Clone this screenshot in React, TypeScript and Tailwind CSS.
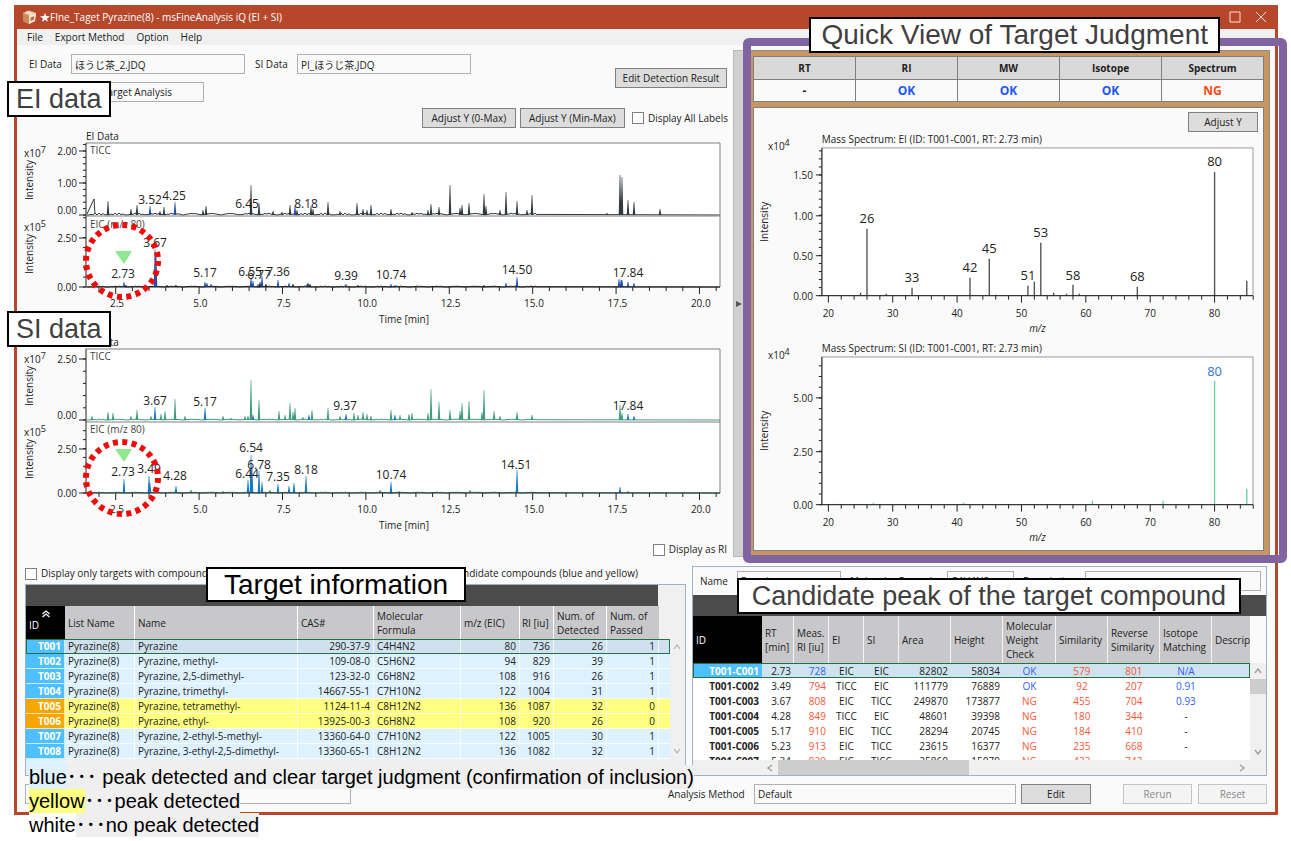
import React, { useState } from "react";

type Peak = [number, number];
type Label = [number, number, string];

interface Trace {
  top: number;
  base: number;
  name: string;
  exponent: string;
  color: string;
  markColor: string;
  noise: number;
  peaks: Peak[];
  marked: Peak[];
  labels: Label[];
  ticks: [number, number, string][];
  minor: number;
}

const eiTraces: Trace[] = [
  {
    top: 13,
    base: 85,
    name: "TICC",
    exponent: "7",
    color: "#33383c",
    markColor: "#1d4fb0",
    noise: 2,
    peaks: [
      [108, 14], [131, 6], [137, 10], [160, 4], [164, 8], [203, 5], [206, 9], [251, 30], [259, 12],
      [273, 4], [282, 3], [290, 10], [297, 5], [311, 9], [313, 6], [328, 13], [340, 4], [357, 12],
      [363, 6], [367, 5], [371, 10], [391, 6], [412, 3], [428, 5], [431, 11], [439, 8], [450, 30],
      [460, 7], [462, 10], [469, 12], [484, 21], [486, 9], [500, 5], [506, 23], [517, 14], [527, 5],
      [532, 20], [607, 2], [620, 40], [622, 38], [628, 15], [634, 13], [660, 6],
    ],
    marked: [[150, 9], [175, 13], [295, 9]],
    labels: [[150, 74, "3.52"], [174, 70, "4.25"], [247, 78, "6.45"], [306, 78, "8.18"]],
    ticks: [[21, 25, "2.00"], [53, 57, "1.00"], [85, 84, "0.00"]],
    minor: 6.4,
  },
  {
    top: 87,
    base: 157,
    name: "EIC (m/z 80)",
    exponent: "5",
    color: "#222222",
    markColor: "#1d4fb0",
    noise: 1,
    peaks: [[126, 2], [167, 2], [176, 2], [260, 5], [266, 3], [293, 3], [308, 4], [310, 3], [358, 2], [484, 2]],
    marked: [
      [124, 5], [155, 38], [156, 34], [205, 5], [207, 4], [211, 3], [251, 9], [253, 6], [258, 3],
      [262, 11], [278, 7], [289, 4], [307, 3], [346, 3], [391, 3], [395, 2], [506, 4], [517, 10],
      [619, 8], [621, 7], [622, 7], [628, 5], [634, 4],
    ],
    labels: [
      [155, 117, "3.67"], [123, 148, "2.73"], [205, 147, "5.17"], [250, 146, "6.55"], [259, 149, "6.77"],
      [278, 146, "7.36"], [346, 150, "9.39"], [391, 149, "10.74"], [517, 144, "14.50"], [628, 147, "17.84"],
    ],
    ticks: [[108, 112, "2.50"], [157, 161, "0.00"]],
    minor: 9.9,
  },
];

const siTraces: Trace[] = [
  {
    top: 13,
    base: 84,
    name: "TICC",
    exponent: "7",
    color: "#3f9e7e",
    markColor: "#1679c4",
    noise: 1,
    peaks: [
      [92, 4], [108, 8], [113, 7], [131, 4], [137, 10], [151, 4], [161, 6], [165, 9], [175, 21],
      [185, 4], [223, 4], [231, 2], [245, 4], [248, 4], [251, 40], [259, 20], [279, 9], [285, 5],
      [290, 17], [293, 8], [295, 12], [303, 3], [312, 10], [328, 12], [340, 4], [354, 7], [358, 5],
      [363, 8], [367, 6], [371, 4], [391, 10], [400, 5], [409, 6], [412, 7], [428, 7], [431, 31],
      [439, 18], [450, 10], [460, 9], [462, 17], [469, 19], [482, 8], [484, 30], [494, 9], [500, 4],
      [517, 8], [532, 5], [620, 15], [622, 7],
    ],
    marked: [[155, 13], [205, 12], [253, 5], [309, 5], [346, 6], [395, 5], [628, 6], [634, 4]],
    labels: [[155, 69, "3.67"], [205, 70, "5.17"], [345, 74, "9.37"], [628, 74, "17.84"]],
    ticks: [[23, 27, "2.50"], [84, 83, "0.00"]],
    minor: 12.2,
  },
  {
    top: 86,
    base: 157,
    name: "EIC (m/z 80)",
    exponent: "5",
    color: "#2c8a68",
    markColor: "#1679c4",
    noise: 1,
    peaks: [[157, 3], [191, 3], [223, 2], [270, 3], [380, 3], [399, 2], [470, 3], [628, 2]],
    marked: [
      [124, 14], [149, 17], [150, 10], [176, 7], [248, 13], [251, 38], [252, 26], [259, 22], [262, 11],
      [278, 9], [289, 7], [294, 10], [306, 17], [391, 11], [517, 23], [620, 6],
    ],
    labels: [
      [123, 140, "2.73"], [149, 137, "3.49"], [175, 144, "4.28"], [251, 116, "6.54"], [259, 133, "6.78"],
      [247, 142, "6.44"], [278, 145, "7.35"], [306, 138, "8.18"], [391, 143, "10.74"], [516, 133, "14.51"],
    ],
    ticks: [[113, 117, "2.50"], [157, 161, "0.00"]],
    minor: 8.9,
  },
];

const targets = [
  ["T001", "Pyrazine", "290-37-9", "C4H4N2", "80", "736", "26", "1"],
  ["T002", "Pyrazine, methyl-", "109-08-0", "C5H6N2", "94", "829", "39", "1"],
  ["T003", "Pyrazine, 2,5-dimethyl-", "123-32-0", "C6H8N2", "108", "916", "26", "1"],
  ["T004", "Pyrazine, trimethyl-", "14667-55-1", "C7H10N2", "122", "1004", "31", "1"],
  ["T005", "Pyrazine, tetramethyl-", "1124-11-4", "C8H12N2", "136", "1087", "32", "0"],
  ["T006", "Pyrazine, ethyl-", "13925-00-3", "C6H8N2", "108", "920", "26", "0"],
  ["T007", "Pyrazine, 2-ethyl-5-methyl-", "13360-64-0", "C7H10N2", "122", "1005", "30", "1"],
  ["T008", "Pyrazine, 3-ethyl-2,5-dimethyl-", "13360-65-1", "C8H12N2", "136", "1082", "32", "1"],
];

const candidates = [
  ["T001-C001", "2.73", "728", "EIC", "EIC", "82802", "58034", "OK", "579", "801", "N/A"],
  ["T001-C002", "3.49", "794", "TICC", "EIC", "111779", "76889", "OK", "92", "207", "0.91"],
  ["T001-C003", "3.67", "808", "EIC", "TICC", "249870", "173877", "NG", "455", "704", "0.93"],
  ["T001-C004", "4.28", "849", "TICC", "EIC", "48601", "39398", "NG", "180", "344", "-"],
  ["T001-C005", "5.17", "910", "EIC", "TICC", "28294", "20745", "NG", "184", "410", "-"],
  ["T001-C006", "5.23", "913", "EIC", "TICC", "23615", "16377", "NG", "235", "668", "-"],
  ["T001-C007", "5.34", "920", "EIC", "TICC", "25860", "15079", "NG", "423", "742", "-"],
];

const range = (n: number) => Array.from({ length: n }, (_, i) => i);

const peakPath = (peaks: Peak[], base: number) =>
  peaks.map(([x, h]) => `M${x - 1.3} ${base}L${x - 0.3} ${base - h}H${x + 0.3}L${x + 1.3} ${base}Z`).join("");

const noisePath = (base: number, amp: number) =>
  "M87 " + base + range(226).map((i) => {
    const level = Math.abs(Math.sin(i * 12.9) * Math.sin(i * 4.7)) * amp;
    return `L${89 + i * 2} ${(base - level).toFixed(1)}`;
  }).join("") + `L720 ${base}`;

interface ChromatogramProps {
  title: string;
  traces: Trace[];
  markerY: number;
  circleY: number;
}

const Chromatogram: React.FC<ChromatogramProps> = ({ title, traces, markerY, circleY }) => (
  <svg viewBox="17 0 716 206" className="block w-full" role="img" aria-label={title}>
    <text x="86" y="10" fontSize="10" fill="#222">{title}</text>
    <rect x="86" y="13" width="634" height="144" fill="#fff" />
    {traces.map((t) => (
      <g key={t.name}>
        <text x="90" y={t.top + 11} fontSize="10" fill="#444">{t.name}</text>
        <path d={noisePath(t.base, t.noise)} fill="none" stroke={t.color} strokeWidth="1" />
        <path d={peakPath(t.peaks, t.base)} fill={t.color} />
        <path d={peakPath(t.marked, t.base)} fill={t.markColor} />
        {t.labels.map(([x, y, text]) => (
          <text key={text} x={x} y={y} fontSize="12" fill="#222" textAnchor="middle">{text}</text>
        ))}
        {range(Math.floor((t.base - t.top) / t.minor) + 1).map((i) => (
          <path key={i} d={`M83 ${t.base - i * t.minor}h3`} stroke="#222" />
        ))}
        {t.ticks.map(([y, textY, text]) => (
          <g key={text}>
            <path d={`M79 ${y}h7`} stroke="#222" />
            <text x="77" y={textY} fontSize="10" fill="#222" textAnchor="end">{text}</text>
          </g>
        ))}
        <text x="24" y={t.top + 14} fontSize="10" fill="#222">
          x10<tspan dy="-4" fontSize="9">{t.exponent}</tspan>
        </text>
        <text transform={`translate(33 ${t.top + 37}) rotate(-90)`} fontSize="10" fill="#222" textAnchor="middle">
          Intensity
        </text>
      </g>
    ))}
    {title === "EI Data" && <path d="M94 69L87 84M94 69L95 84" stroke="#33383c" fill="none" />}
    <path d="M86 13H720V157M86 86H720" fill="none" stroke="#808080" />
    <path d="M86 13V157H720" fill="none" stroke="#222" />
    {range(38).map((i) => {
      const x = 99 + i * 16.68;
      const major = i % 5 === 1;
      return x < 720 && <path key={i} d={`M${x} 157v${major ? 7 : 4}`} stroke="#222" />;
    })}
    {["2.5", "5.0", "7.5", "10.0", "12.5", "15.0", "17.5", "20.0"].map((text, i) => (
      <text key={text} x={117 + i * 83.4} y="177" fontSize="10" fill="#222" textAnchor="middle">{text}</text>
    ))}
    <text x="404" y="193" fontSize="10" fill="#222" textAnchor="middle">Time [min]</text>
    <path d={`M115 ${markerY}h17l-8 13z`} fill="#8fe88f" />
    <circle cx="122" cy={circleY} r="36" fill="none" stroke="#f00a0a" strokeWidth="6" strokeDasharray="5 4.425" />
  </svg>
);

interface SpectrumProps {
  title: string;
  peaks: Peak[];
  labels: Label[];
  ticks: [number, string][];
  minor: number;
  stroke: string;
  labelColor: string;
}

const Spectrum: React.FC<SpectrumProps> = ({ title, peaks, labels, ticks, minor, stroke, labelColor }) => {
  const mz = (v: number) => 828.5 + (v - 20) * 6.45;
  return (
    <svg viewBox="754 0 510 209" className="block w-full" role="img" aria-label={title}>
      <text x="822" y="13" fontSize="10" fill="#222">{title}</text>
      <rect x="822" y="18" width="432" height="148" fill="#fff" stroke="#999" />
      <text x="768" y="20" fontSize="10" fill="#222">
        x10<tspan dy="-4" fontSize="9">4</tspan>
      </text>
      <text transform="translate(768 92) rotate(-90)" fontSize="10" fill="#222" textAnchor="middle">Intensity</text>
      {peaks.map(([v, h]) => (
        <path key={v} d={`M${mz(v)} 166v${-h}`} stroke={stroke} strokeWidth="1.4" />
      ))}
      {labels.map(([v, y, text]) => (
        <text key={text} x={mz(v)} y={y} fontSize="13" fill={labelColor} textAnchor="middle">{text}</text>
      ))}
      <path d="M822 18V166H1254" fill="none" stroke="#222" />
      {range(Math.floor(148 / minor) + 1).map((i) => (
        <path key={i} d={`M819 ${166 - i * minor}h3`} stroke="#222" />
      ))}
      {ticks.map(([y, text]) => (
        <g key={text}>
          <path d={`M816 ${y}h6`} stroke="#222" />
          <text x="813" y={y + 4} fontSize="10" fill="#222" textAnchor="end">{text}</text>
        </g>
      ))}
      {range(34).map((i) => (
        <path key={i} d={`M${mz(20 + i * 2)} 166v${i % 5 === 0 ? 7 : 4}`} stroke="#222" />
      ))}
      {[20, 30, 40, 50, 60, 70, 80].map((v) => (
        <text key={v} x={mz(v)} y="187" fontSize="10" fill="#222" textAnchor="middle">{v}</text>
      ))}
      <text x="1038" y="202" fontSize="10" fontStyle="italic" fill="#222" textAnchor="middle">m/z</text>
    </svg>
  );
};

const field = "h-5 min-w-0 border border-[#b0b0b0] bg-[#fafafa] px-[3px]";
const button = "h-5 border border-[#808080] bg-[#dddddd] text-center whitespace-nowrap";
const disabledButton = "h-5 border border-[#c4c4c4] bg-[#f4f4f4] text-center text-[#888888]";
const callout = "absolute border-2 border-black bg-white whitespace-nowrap font-['Liberation_Sans',sans-serif]";

const Chevron: React.FC<{ d: string }> = ({ d }) => (
  <svg viewBox="0 0 8 8" className="h-2 w-2" fill="none" stroke="#a0a0a0" strokeWidth="1.4">
    <path d={d} />
  </svg>
);

const TargetTable: React.FC = () => {
  const [selected, setSelected] = useState("T001");
  const head = "border-r border-white px-[3px] text-left font-normal";
  const cell = "h-[15px] border-r border-b border-white/70 px-[3px] whitespace-nowrap";

  return (
    <div className="flex-1 border border-[#9fb3c8] bg-[#f0f0f0]">
      <div className="mr-[27px] h-[21px] bg-[#4b4b4b]" />
      <div className="flex">
        <table className="min-w-0 flex-1 table-fixed border-separate border-spacing-0 leading-[14px]">
          <colgroup>
            <col className="w-[39px]" />
            <col className="w-[70px]" />
            <col />
            <col className="w-[76px]" />
            <col className="w-[87px]" />
            <col className="w-[59px]" />
            <col className="w-[34px]" />
            <col className="w-[53px]" />
            <col className="w-[52px]" />
            <col className="w-[11px]" />
          </colgroup>
          <thead>
            <tr className="h-[33px] bg-[#c8c8cb]">
              <th className="bg-black px-[3px] text-left font-normal text-white">
                <svg viewBox="0 0 10 8" className="mx-auto h-2 w-2.5" fill="none" stroke="#fff" strokeWidth="1.3">
                  <path d="M1.5 4L5 1L8.5 4M1.5 7L5 4L8.5 7" />
                </svg>
                <span className="block pb-1">ID</span>
              </th>
              <th className={head}>List Name</th>
              <th className={head}>Name</th>
              <th className={head}>CAS#</th>
              <th className={head}>Molecular<br />Formula</th>
              <th className={head}>m/z (EIC)</th>
              <th className="border-r border-white px-[2px] text-left font-normal whitespace-nowrap">RI [iu]</th>
              <th className={head}>Num. of<br />Detected</th>
              <th className="px-[3px] text-left font-normal">Num. of<br />Passed</th>
              <th className="bg-[#f0f0f0]" />
            </tr>
          </thead>
          <tbody>
            {targets.map(([id, name, cas, formula, mz, ri, detected, passed]) => {
              const yellow = passed === "0";
              return (
                <tr
                  key={id}
                  onClick={() => setSelected(id)}
                  className={
                    id === selected
                      ? "bg-[#cfe1ee] outline outline-1 -outline-offset-1 outline-[#217346]"
                      : yellow
                        ? "bg-[#ffff80]"
                        : "bg-[#ddf1ff]"
                  }
                >
                  <td className={`${cell} text-right font-bold text-white ${yellow ? "bg-[#f7a600]" : "bg-[#4fc0ff]"}`}>{id}</td>
                  <td className={cell}>Pyrazine(8)</td>
                  <td className={cell}>{name}</td>
                  <td className={`${cell} text-right`}>{cas}</td>
                  <td className={cell}>{formula}</td>
                  <td className={`${cell} text-right`}>{mz}</td>
                  <td className={`${cell} text-right`}>{ri}</td>
                  <td className={`${cell} text-right`}>{detected}</td>
                  <td className={`${cell} text-right`}>{passed}</td>
                  <td className="border-b border-white/70" />
                </tr>
              );
            })}
          </tbody>
        </table>
        <div className="mt-[33px] flex w-[15px] flex-col items-center justify-between py-1 opacity-60">
          <Chevron d="M1 6L4 2L7 6" />
          <Chevron d="M1 2L4 6L7 2" />
        </div>
      </div>
      <div className="h-4 w-[39px] bg-[#ddf1ff]" />
    </div>
  );
};

const CandidateTable: React.FC = () => {
  const head = "border-r border-white/80 px-[3px] text-left font-normal";
  const cell = "h-[15px] px-[3px] text-right whitespace-nowrap";
  const mid = "h-[15px] px-[3px] text-center whitespace-nowrap";
  const red = "text-[#ff5533]";
  const blue = "text-[#2f5fff]";

  return (
    <div className="min-w-0 flex-[574] border border-[#9fb3c8] bg-[#fafafa]">
      <div className="flex items-center px-[5px] pt-1 pb-1">
        <label htmlFor="name" className="w-[39px] pl-[2px]">Name</label>
        <input id="name" readOnly value="Pyrazine" className={`${field} w-[104px]`} />
        <label htmlFor="formula" className="w-[106px] pl-[9px]">Molecular Formula</label>
        <input id="formula" readOnly value="C4H4N2" className={`${field} w-[67px]`} />
        <label htmlFor="description" className="w-[71px] pl-[9px]">Description</label>
        <input id="description" readOnly value="" className={`${field} flex-1`} />
      </div>
      <div className="h-[21px] bg-[#4b4b4b]" />
      <div className="flex h-[144px] overflow-hidden">
        <div className="min-w-0 flex-1 overflow-hidden bg-white">
          <table className="w-full table-fixed border-separate border-spacing-0 leading-[14px]">
            <colgroup>
              <col className="w-[69px]" />
              <col className="w-[32px]" />
              <col className="w-[35px]" />
              <col className="w-[35px]" />
              <col className="w-[35px]" />
              <col className="w-[52px]" />
              <col className="w-[52px]" />
              <col className="w-[53px]" />
              <col className="w-[52px]" />
              <col className="w-[52px]" />
              <col className="w-[52px]" />
              <col />
            </colgroup>
            <thead>
              <tr className="h-[47px] bg-[#c8c8cb]">
                <th className="bg-black px-[3px] text-left font-normal text-white">ID</th>
                <th className={head}>RT<br />[min]</th>
                <th className={head}>Meas.<br />RI [iu]</th>
                <th className={head}>EI</th>
                <th className={head}>SI</th>
                <th className={head}>Area</th>
                <th className={head}>Height</th>
                <th className={head}>Molecular<br />Weight<br />Check</th>
                <th className={head}>Similarity</th>
                <th className={head}>Reverse<br />Similarity</th>
                <th className={head}>Isotope<br />Matching</th>
                <th className="overflow-hidden px-[3px] text-left font-normal">Description</th>
              </tr>
            </thead>
            <tbody>
              {candidates.map(([id, rt, ri, ei, si, area, height, check, sim, reverse, isotope], i) => (
                <tr key={id} className={i === 0 ? "bg-[#cfe3ee] outline outline-1 -outline-offset-1 outline-[#217346]" : "bg-white"}>
                  <td className={`${cell} font-bold ${i === 0 ? "bg-[#4fc0ff] text-white" : ""}`}>{id}</td>
                  <td className={cell}>{rt}</td>
                  <td className={`${cell} ${i === 0 ? blue : red}`}>{ri}</td>
                  <td className={mid}>{ei}</td>
                  <td className={mid}>{si}</td>
                  <td className={cell}>{area}</td>
                  <td className={cell}>{height}</td>
                  <td className={`${mid} ${check === "OK" ? blue : red}`}>{check}</td>
                  <td className={`${mid} ${red}`}>{sim}</td>
                  <td className={`${mid} ${red}`}>{reverse}</td>
                  <td className={`${mid} ${isotope === "-" ? "" : blue}`}>{isotope}</td>
                  <td />
                </tr>
              ))}
            </tbody>
          </table>
        </div>
        <div className="mt-[47px] flex w-4 flex-col items-center bg-[#f0f0f0] pt-1">
          <Chevron d="M1 6L4 2L7 6" />
          <div className="mt-1 h-[15px] w-full bg-[#cdcdcd]" />
          <div className="mt-auto mb-1"><Chevron d="M1 2L4 6L7 2" /></div>
        </div>
      </div>
      <div className="flex h-[15px] items-center bg-[#f0f0f0] pr-5 pl-[73px]">
        <Chevron d="M6 1L2 4L6 7" />
        <div className="ml-1 h-full w-[191px] bg-[#cdcdcd]" />
        <div className="ml-auto"><Chevron d="M2 1L6 4L2 7" /></div>
      </div>
    </div>
  );
};

const Judgment: React.FC = () => (
  <div className="relative min-w-0 flex-[520]">
    <div className="flex h-full flex-col border border-[#8c8c8c] bg-[#c89664] py-[5px] pr-[5px] pl-[2px]">
      <table className="w-full table-fixed border-collapse bg-[#fafafa] text-center">
        <thead>
          <tr className="h-[23px] bg-[#d9d9d9]">
            {["RT", "RI", "MW", "Isotope", "Spectrum"].map((name) => (
              <th key={name} className="border border-[#808080] font-bold">{name}</th>
            ))}
          </tr>
        </thead>
        <tbody>
          <tr className="h-[22px] text-xs font-bold">
            <td className="border border-[#808080]">-</td>
            <td className="border border-[#808080] text-[#1a56ff]">OK</td>
            <td className="border border-[#808080] text-[#1a56ff]">OK</td>
            <td className="border border-[#808080] text-[#1a56ff]">OK</td>
            <td className="border border-[#808080] text-[#ff4a12]">NG</td>
          </tr>
        </tbody>
      </table>
      <div className="mt-[5px] flex-1 border border-[#808080] bg-[#fafafa] pt-1">
        <div className="flex h-[18px] justify-end pr-[5px]">
          <button className={`${button} w-[70px]`}>Adjust Y</button>
        </div>
        <Spectrum
          title="Mass Spectrum: EI (ID: T001-C001, RT: 2.73 min)"
          stroke="#555"
          labelColor="#222"
          peaks={[
            [25, 3], [26, 67], [29, 2], [33, 8], [42, 18], [45, 37], [46, 1], [51, 10], [52, 14], [53, 53],
            [55, 3], [57, 2], [58, 11], [59, 2], [68, 9], [80, 124], [85, 15],
          ]}
          labels={[
            [26, 93, "26"], [33, 152, "33"], [42, 142, "42"], [45, 123, "45"], [51, 150, "51"],
            [53, 107, "53"], [58, 150, "58"], [68, 151, "68"], [80, 36, "80"],
          ]}
          ticks={[[45, "1.50"], [86, "1.00"], [126, "0.50"], [166, "0.00"]]}
          minor={8.06}
        />
        <Spectrum
          title="Mass Spectrum: SI (ID: T001-C001, RT: 2.73 min)"
          stroke="#6fd0a4"
          labelColor="#2f73e0"
          peaks={[[21, 1], [27, 2], [41, 2], [61, 4], [72, 4], [80, 124], [85, 16]]}
          labels={[[80, 37, "80"]]}
          ticks={[[59, "5.00"], [113, "2.50"], [166, "0.00"]]}
          minor={10.7}
        />
      </div>
    </div>
    <div className="pointer-events-none absolute -top-[12px] -right-[17px] -bottom-[6px] -left-[7px] rounded-md border-8 border-[#8064a2]" />
    <div className={`${callout} -top-[33px] right-[50px] px-[10px] text-[28px] leading-8 text-[#404040]`}>
      Quick View of Target Judgment
    </div>
  </div>
);

const App: React.FC = () => {
  const [allLabels, setAllLabels] = useState(false);
  const [displayRi, setDisplayRi] = useState(false);
  const [onlyTargets, setOnlyTargets] = useState(false);
  const checkbox = "h-3 w-3 appearance-none border border-[#808080] bg-white checked:bg-[#4fc0ff]";

  return (
    <div className="relative bg-white pt-[5px] pr-[13px] pb-[25px] pl-[14px] font-['Open_Sans','Noto_Sans_CJK_JP',sans-serif] text-[10px] text-[#222222]">
      <div className="border-[3px] border-t-0 border-[#b7472a] bg-[#fafafa]">
        <header className="flex h-6 items-center bg-[#b7472a] px-1 text-white">
          <svg viewBox="0 0 16 16" className="mr-[3px] h-4 w-4">
            <path d="M2 4L8 1.5L15 4L14 12L8 15L2 12Z" fill="#e9c9a4" />
            <path d="M2 4L8 6.5V15L2 12Z" fill="#c98a5c" />
            <path d="M8 6.5L15 4L14 12L8 15Z" fill="#f4e3cf" />
            <path d="M9.5 8.5L13 7.2V10.5L9.5 12Z" fill="#d2603c" />
            <path d="M5 2.8L11 5.2" stroke="#fff" />
          </svg>
          <h1>★FIne_Taget Pyrazine(8) - msFineAnalysis iQ (EI + SI)</h1>
          <button aria-label="Maximize" className="ml-auto p-1">
            <svg viewBox="0 0 12 12" className="h-3 w-3" fill="none" stroke="#ffe0d6">
              <path d="M1 1H11V11H1Z" />
            </svg>
          </button>
          <button aria-label="Close" className="ml-[6px] p-1">
            <svg viewBox="0 0 12 12" className="h-3 w-3" fill="none" stroke="#ffe0d6">
              <path d="M1 1L11 11M11 1L1 11" />
            </svg>
          </button>
        </header>
        <nav className="flex h-4 items-center gap-3 bg-[#f0f0f0] px-[10px]">
          <button>File</button>
          <button>Export Method</button>
          <button>Option</button>
          <button>Help</button>
        </nav>

        <main>
          <div className="flex pt-[5px] pr-[5px]">
            <section className="min-w-0 flex-[716]">
              <div className="flex justify-between pt-[4px] pr-[6px] pl-3">
                <div>
                  <div className="flex items-center">
                    <label htmlFor="ei" className="w-[42px]">EI Data</label>
                    <input id="ei" readOnly value="ほうじ茶_2.JDQ" className={`${field} w-[174px]`} />
                    <label htmlFor="si" className="w-[52px] pl-[10px]">SI Data</label>
                    <input id="si" readOnly value="PI_ほうじ茶.JDQ" className={`${field} w-[174px]`} />
                  </div>
                  <input
                    aria-label="Analysis type"
                    readOnly
                    value="Target Analysis"
                    className={`${field} mt-2 w-[175px] pl-[72px]`}
                  />
                </div>
                <button className={`${button} mt-[14px] w-[112px]`}>Edit Detection Result</button>
              </div>
              <div className="flex items-center justify-end gap-1 pt-[6px] pr-[5px]">
                <button className={`${button} w-[94px]`}>Adjust Y (0-Max)</button>
                <button className={`${button} w-[105px]`}>Adjust Y (Min-Max)</button>
                <label className="flex items-center gap-1 pl-[3px]">
                  <input type="checkbox" className={checkbox} checked={allLabels} onChange={() => setAllLabels(!allLabels)} />
                  Display All Labels
                </label>
              </div>
              <div className="pt-[2px]">
                <Chromatogram title="EI Data" traces={eiTraces} markerY={121} circleY={131} />
                <Chromatogram title="SI Data" traces={siTraces} markerY={113} circleY={142} />
              </div>
              <label className="flex items-center justify-end gap-1 pr-[6px]">
                <input type="checkbox" className={checkbox} checked={displayRi} onChange={() => setDisplayRi(!displayRi)} />
                Display as RI
              </label>
            </section>
            <button aria-label="Collapse panel" className="flex w-[17px] items-center border border-[#b8b8b8] bg-[#d0d0d0] pl-[2px]">
              <svg viewBox="0 0 6 8" className="h-2 w-[6px]">
                <path d="M0 1L6 4L0 7Z" fill="#555" />
              </svg>
            </button>
            <Judgment />
          </div>

          <div className="flex gap-[6px] px-2 pt-[9px]">
            <section className="flex min-w-0 flex-[662] flex-col">
              <div className="flex h-[18px] items-start">
                <label className="flex items-center gap-1">
                  <input type="checkbox" className={checkbox} checked={onlyTargets} onChange={() => setOnlyTargets(!onlyTargets)} />
                  Display only targets with compound
                </label>
                <span className="ml-auto pr-[48px]">candidate compounds (blue and yellow)</span>
              </div>
              <TargetTable />
            </section>
            <CandidateTable />
          </div>

          <footer className="flex items-center px-2 py-2">
            <input aria-label="Status" readOnly value="" className={`${field} w-[326px]`} />
            <label htmlFor="method" className="ml-auto w-[86px]">Analysis Method</label>
            <input id="method" readOnly value="Default" className={`${field} w-[262px]`} />
            <button className={`${button} ml-[5px] w-[70px]`}>Edit</button>
            <button disabled className={`${disabledButton} ml-8 w-[69px]`}>Rerun</button>
            <button disabled className={`${disabledButton} ml-[6px] w-[69px]`}>Reset</button>
          </footer>
        </main>
      </div>

      <div className={`${callout} top-[81px] left-[7px] px-[7px] text-[27px] leading-8 text-[#404040]`}>EI data</div>
      <div className={`${callout} top-[311px] left-[7px] px-[7px] text-[27px] leading-8 text-[#404040]`}>SI data</div>
      <div className={`${callout} top-[567px] left-[206px] px-4 text-[28px] leading-[31px] text-black`}>Target information</div>
      <div className={`${callout} top-[578px] right-[50px] px-[13px] text-[27px] leading-8 text-[#404040]`}>
        Candidate peak of the target compound
      </div>

      <div className="absolute top-[765px] left-[29px] font-['Liberation_Sans','Noto_Sans_CJK_JP',sans-serif] text-[20px] leading-6 whitespace-nowrap text-black">
        <p>
          <span className="inline-block bg-[#ddf1ff]">blue</span>
          <span className="inline-block bg-[#efefef]">･･･&nbsp;peak detected and clear target judgment (confirmation of inclusion)</span>
        </p>
        <p>
          <span className="inline-block bg-[#ffff80]">yellow</span>
          <span className="inline-block bg-[#efefef]">･･･peak detected</span>
        </p>
        <p>
          <span className="inline-block bg-white">white</span>
          <span className="inline-block bg-[#efefef]">･･･no peak detected</span>
        </p>
      </div>
    </div>
  );
};

export default App;
